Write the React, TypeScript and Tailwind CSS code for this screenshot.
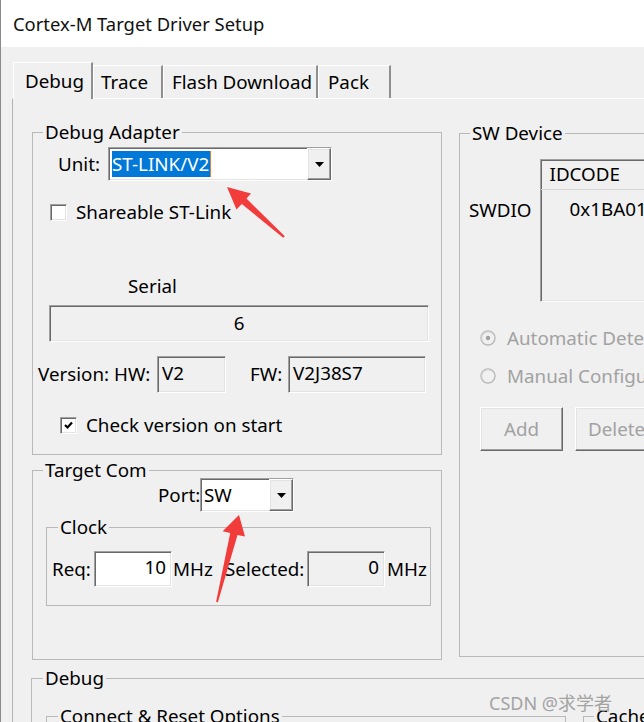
import type { ReactNode } from 'react';

const sunken =
    'border border-t-[#a0a0a0] border-l-[#a0a0a0] border-r-white border-b-white shadow-[inset_1px_1px_0_#696969,inset_-1px_-1px_0_#e3e3e3]';
const raised =
    'border border-t-white border-l-white border-r-[#696969] border-b-[#696969] shadow-[inset_-1px_-1px_0_#a0a0a0,inset_1px_1px_0_#e3e3e3]';

function DropArrow() {
    return (
        <svg width="9" height="5" viewBox="0 0 9 5">
            <path d="M0 0h9L4.5 5z" fill="#000" />
        </svg>
    );
}

function Combo({ className, children }: { className: string; children: ReactNode }) {
    return (
        <div className={`flex h-[34px] bg-white ${sunken} ${className}`}>
            <div className="flex flex-1 items-center pl-[3px]">{children}</div>
            <div className={`flex w-[24px] items-center justify-center bg-[#f0f0f0] ${raised}`}>
                <DropArrow />
            </div>
        </div>
    );
}

function CheckBox({ checked }: { checked?: boolean }) {
    return (
        <div className={`flex h-[17px] w-[17px] shrink-0 items-center justify-center bg-white ${sunken}`}>
            {checked && (
                <svg width="9" height="9" viewBox="0 0 9 9">
                    <path d="M1 4l2.5 2.5L8 1.5" stroke="#000" strokeWidth="2.2" fill="none" />
                </svg>
            )}
        </div>
    );
}

function Radio({ dot }: { dot?: boolean }) {
    return (
        <svg width="16" height="16" viewBox="0 0 16 16" className="shrink-0">
            <circle cx="8" cy="8" r="7" fill="#f0f0f0" stroke="#b8b8b8" strokeWidth="1.4" />
            <path d="M3 12A6.4 6.4 0 0 1 12 3" stroke="#cfcfcf" strokeWidth="1.2" fill="none" />
            {dot && <circle cx="8" cy="8" r="2.2" fill="#a0a0a0" />}
        </svg>
    );
}

function Group({ title, className, legendClass, children }: { title: string; className?: string; legendClass?: string; children: ReactNode }) {
    return (
        <fieldset className={`min-w-0 border border-[#b9b9b9] ${className ?? ''}`}>
            <legend className={`px-[2px] leading-[22px] whitespace-nowrap ${legendClass ?? 'ml-[10px]'}`}>{title}</legend>
            {children}
        </fieldset>
    );
}

function Tab({ label, active, className }: { label: string; active?: boolean; className: string }) {
    return (
        <div
            className={`flex items-center border-t border-l border-t-white border-l-white border-r-2 border-r-[#8f8f8f] bg-[#f0f0f0] ${
                active ? 'relative z-10 -mb-px h-[37px]' : 'h-[33px]'
            } ${className}`}
        >
            {label}
        </div>
    );
}

export default function App() {
    return (
        <div className="relative h-[722px] w-[644px] overflow-hidden border-l border-[#8a8a8a] bg-[#f0f0f0] font-['Noto_Sans','Liberation_Sans',sans-serif] text-[18.8px] text-black">
            {/* Title bar */}
            <div className="flex h-[47px] items-center bg-white pl-[12px] text-[18.4px] text-[#111]">Cortex-M Target Driver Setup</div>

            {/* Tabs */}
            <div className="flex h-[51px] items-end pl-[12px] whitespace-nowrap">
                <Tab label="Debug" active className="w-[80px] pl-[11px]" />
                <Tab label="Trace" className="w-[70px] pl-[7px]" />
                <Tab label="Flash Download" className="w-[155px] pl-[8px]" />
                <Tab label="Pack" className="w-[73px] pl-[9px]" />
            </div>

            {/* Tab panel */}
            <div className="ml-[11px] border-t border-l border-t-white border-l-[#b4b4b4] pt-[22px] pl-[19px]">
                <div className="flex items-start">
                    {/* Left column */}
                    <div className="w-[410px] shrink-0">
                        <Group title="Debug Adapter" className="pb-[18px]">
                            <div className="mt-[4px] flex items-center pl-[25px]">
                                <span className="w-[50px]">Unit:</span>
                                <Combo className="w-[224px]">
                                    <span className="flex h-[26px] items-center border-r border-r-[#e07b39] bg-[#0078d7] pr-[1px] text-white">
                                        ST-LINK/V2
                                    </span>
                                </Combo>
                            </div>
                            <div className="mt-[20px] flex h-[22px] items-center gap-[9px] pl-[17px]">
                                <CheckBox />
                                <span>Shareable ST-Link</span>
                            </div>
                            <div className="mt-[52px] pl-[95px] leading-[22px]">Serial</div>
                            <div className={`mt-[8px] ml-[16px] flex h-[37px] w-[380px] items-center justify-center ${sunken}`}>6</div>
                            <div className="mt-[14px] flex h-[37px] items-center pl-[5px] whitespace-nowrap">
                                <span className="w-[119px]">Version: HW:</span>
                                <div className={`flex h-[37px] w-[69px] items-center pb-[2px] pl-[4px] ${sunken}`}>V2</div>
                                <span className="ml-[24px] w-[38px]">FW:</span>
                                <div className={`flex h-[37px] w-[138px] items-center pb-[2px] pl-[4px] ${sunken}`}>V2J38S7</div>
                            </div>
                            <div className="mt-[21px] flex h-[22px] items-center gap-[9px] pl-[27px]">
                                <CheckBox checked />
                                <span>Check version on start</span>
                            </div>
                        </Group>

                        <Group title="Target Com" className="mt-[4px] pb-[53px]">
                            <div className="-mt-[3px] flex items-center pl-[125px]">
                                <span className="w-[42px]">Port:</span>
                                <Combo className="w-[94px]">SW</Combo>
                            </div>
                            <Group title="Clock" className="mt-[4px] ml-[13px] w-[385px] pb-[18px]" legendClass="ml-[11px]">
                                <div className="mt-[13px] flex h-[36px] items-center pl-[5px] whitespace-nowrap">
                                    <span className="w-[42px]">Req:</span>
                                    <div className={`flex h-[36px] w-[78px] items-center justify-end bg-white pr-[5px] pb-[4px] ${sunken}`}>10</div>
                                    <span className="ml-[1px] w-[52px]">MHz</span>
                                    <span className="w-[82px]">Selected:</span>
                                    <div className={`flex h-[36px] w-[78px] items-center justify-end pr-[5px] pb-[4px] ${sunken}`}>0</div>
                                    <span className="ml-[2px]">MHz</span>
                                </div>
                            </Group>
                        </Group>
                    </div>

                    {/* Right column */}
                    <div className="ml-[17px] mt-[1px] w-[300px] shrink-0">
                        <Group title="SW Device" className="pb-[205px]">
                            <div className="mt-[15px] flex items-start pl-[9px]">
                                <span className="mt-[40px] w-[71px] leading-[22px]">SWDIO</span>
                                <div className={`h-[143px] w-[220px] ${sunken}`}>
                                    <div className="flex h-[30px] items-center border-b border-[#d6d6d6] pl-[9px]">IDCODE</div>
                                    <div className="pt-[8px] pl-[29px] leading-[22px]">0x1BA01</div>
                                </div>
                            </div>
                            <div className="mt-[25px] flex h-[22px] items-center gap-[11px] pl-[20px] text-[#a2a2a2]">
                                <Radio dot />
                                <span className="whitespace-nowrap">Automatic Detection</span>
                            </div>
                            <div className="mt-[16px] flex h-[22px] items-center gap-[11px] pl-[20px] text-[#a2a2a2]">
                                <Radio />
                                <span className="whitespace-nowrap">Manual Configuration</span>
                            </div>
                            <div className="mt-[20px] flex gap-[12px] pl-[20px] text-[#a2a2a2]">
                                <div className={`flex h-[44px] w-[83px] shrink-0 items-center justify-center bg-[#f0f0f0] ${raised}`}>Add</div>
                                <div className={`flex h-[44px] w-[83px] shrink-0 items-center pl-[12px] bg-[#f0f0f0] ${raised}`}>Delete</div>
                            </div>
                        </Group>
                    </div>
                </div>

                {/* Debug options */}
                <Group title="Debug" className="mt-[7px] -ml-px w-[640px]" legendClass="ml-[11px]">
                    <div className="mt-[16px] flex items-start">
                        <Group title="Connect & Reset Options" className="ml-[14px] h-[80px] w-[520px] shrink-0" legendClass="ml-[11px]">
                            <div />
                        </Group>
                        <Group title="Cache" className="ml-[17px] h-[80px] w-[200px] shrink-0" legendClass="ml-[10px]">
                            <div />
                        </Group>
                    </div>
                </Group>
            </div>

            {/* Watermark */}
            <div className="absolute left-[488px] top-[691px] font-['Noto_Sans','Noto_Sans_CJK_SC',sans-serif] text-[18px] leading-[24px] text-[#a3a3a3]">
                CSDN @求学者
            </div>

            {/* Annotation arrows */}
            <svg className="pointer-events-none absolute inset-0" width="644" height="722" viewBox="0 0 644 722">
                <path d="M226 187 L250 193.5 L245.5 198.5 L283.8 236.3 L282.2 237.8 L240.8 204 L235.5 209.5 Z" fill="#f23b3b" />
                <path d="M238 515 L244 536.5 L236.5 535 L216.9 602.2 L215.1 601.8 L229.2 533 L221.7 531.2 Z" fill="#f23b3b" />
            </svg>
        </div>
    );
}
